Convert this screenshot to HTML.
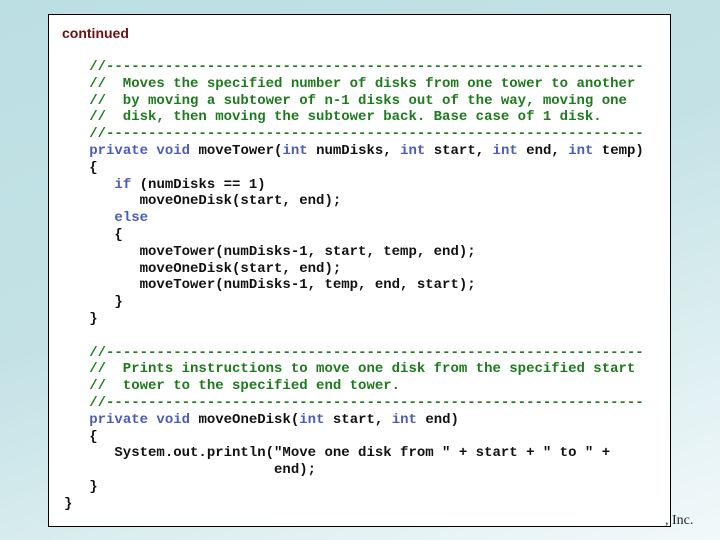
<!DOCTYPE html>
<html><head><style>
body{margin:0;width:720px;height:540px;overflow:hidden;background:linear-gradient(160deg,#bcdfe3 0%,#c4e2e6 45%,#f2f9fa 100%);position:relative;font-family:"Liberation Sans",sans-serif}
.box{position:absolute;left:48px;top:14px;width:623px;height:513px;background:#fff;border:1.5px solid #000;box-sizing:border-box}
.t{position:absolute;left:62px;top:25px;font-size:14px;font-weight:bold;color:#6b0f0f}
pre{position:absolute;left:64px;top:59px;margin:0;font-family:"Liberation Mono",monospace;font-size:14px;line-height:16.8px;font-weight:bold;color:#111}
.c{color:#1d7a1d}.k{color:#4a5cb8}
.inc{position:absolute;left:665px;top:513px;font-family:"Liberation Serif",serif;font-size:14px;color:#222}
</style></head><body>
<div class="box"></div>
<div class="t">continued</div>
<pre>   <span class="c">//----------------------------------------------------------------
   //  Moves the specified number of disks from one tower to another
   //  by moving a subtower of n-1 disks out of the way, moving one
   //  disk, then moving the subtower back. Base case of 1 disk.
   //----------------------------------------------------------------</span>
   <span class="k">private void</span> moveTower(<span class="k">int</span> numDisks, <span class="k">int</span> start, <span class="k">int</span> end, <span class="k">int</span> temp)
   {
      <span class="k">if</span> (numDisks == 1)
         moveOneDisk(start, end);
      <span class="k">else</span>
      {
         moveTower(numDisks-1, start, temp, end);
         moveOneDisk(start, end);
         moveTower(numDisks-1, temp, end, start);
      }
   }

   <span class="c">//----------------------------------------------------------------
   //  Prints instructions to move one disk from the specified start
   //  tower to the specified end tower.
   //----------------------------------------------------------------</span>
   <span class="k">private void</span> moveOneDisk(<span class="k">int</span> start, <span class="k">int</span> end)
   {
      System.out.println("Move one disk from " + start + " to " +
                         end);
   }
}</pre>
<div class="inc">, Inc.</div>
</body></html>
